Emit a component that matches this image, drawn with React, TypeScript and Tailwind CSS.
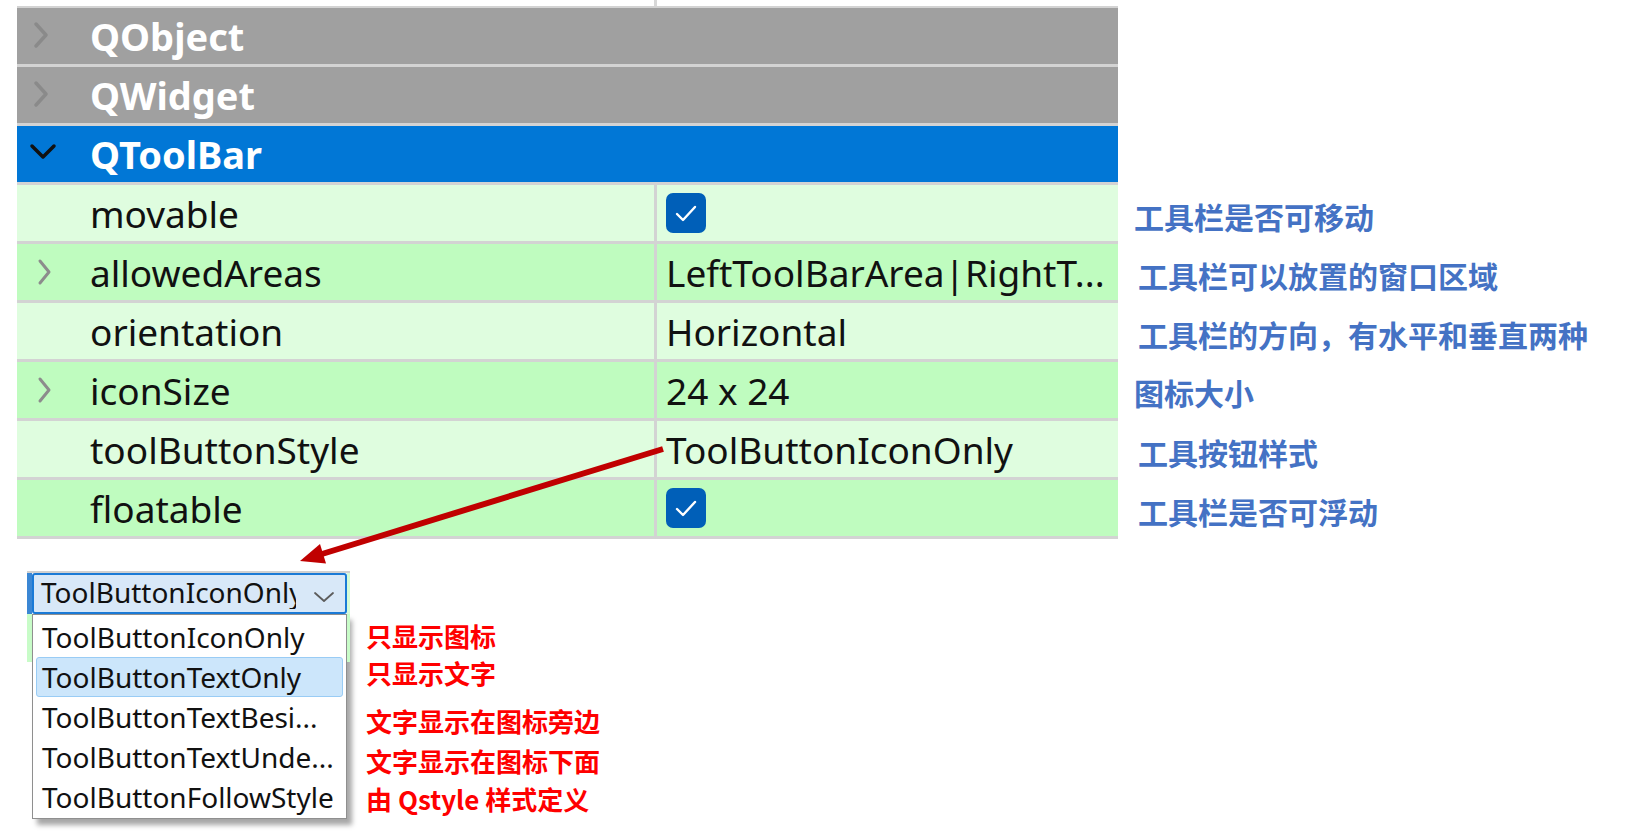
import React from "react";

const LATIN = "font-['Noto_Sans','Noto_Sans_CJK_SC',sans-serif]";
const CJK = "font-['Noto_Sans_CJK_SC',sans-serif]";

function HeaderChevronRight() {
  return (
    <svg width="20" height="28" viewBox="0 0 20 28" className="absolute left-[14px] top-[13px]">
      <path d="M5 3 L15 14 L5 25" fill="none" stroke="#8a8a8a" strokeWidth="3.5" strokeLinecap="round" strokeLinejoin="round" />
    </svg>
  );
}

function HeaderChevronDown() {
  return (
    <svg width="28" height="20" viewBox="0 0 28 20" className="absolute left-[12px] top-[16px]">
      <path d="M3 4 L14 15 L25 4" fill="none" stroke="#111111" strokeWidth="3.5" strokeLinecap="round" strokeLinejoin="round" />
    </svg>
  );
}

function PropChevron() {
  return (
    <svg width="18" height="28" viewBox="0 0 18 28" className="absolute left-[18px] top-[14px]">
      <path d="M5 3 L14 14 L5 25" fill="none" stroke="#8c8c8c" strokeWidth="3" strokeLinecap="round" strokeLinejoin="round" />
    </svg>
  );
}

function CheckBox() {
  return (
    <div className="flex h-[40px] w-[40px] items-center justify-center rounded-[7px] bg-[#005fb8]">
      <svg width="40" height="40" viewBox="0 0 40 40">
        <path d="M11 21 L17 27 L29 14" fill="none" stroke="#ffffff" strokeWidth="2.4" strokeLinecap="round" strokeLinejoin="round" />
      </svg>
    </div>
  );
}

function HeaderRow({ label, bg, expanded }: { label: string; bg: string; expanded?: boolean }) {
  return (
    <div className={`relative flex h-[59px] w-[1101px] items-center border-b-[3px] border-[#d3d3d3] ${bg}`}>
      {expanded ? <HeaderChevronDown /> : <HeaderChevronRight />}
      <span className={`${LATIN} pl-[73px] text-[38px] font-bold leading-none text-white`}>{label}</span>
    </div>
  );
}

function PropRow({
  name,
  value,
  bg,
  expandable,
  note,
  noteClass,
}: {
  name: string;
  value: React.ReactNode;
  bg: string;
  expandable?: boolean;
  note: string;
  noteClass: string;
}) {
  return (
    <div className="flex items-center">
      <div className={`flex h-[59px] w-[1101px] border-b-[3px] border-[#d3d3d3] ${bg}`}>
        <div className="relative flex w-[637px] items-center">
          {expandable ? <PropChevron /> : null}
          <span className={`${LATIN} pl-[73px] text-[37px] leading-none text-[#111111]`}>{name}</span>
        </div>
        <div className="w-[3px] bg-[#d3d3d3]" />
        <div className="flex flex-1 items-center pl-[9px]">
          {typeof value === "string" ? (
            <span className={`${LATIN} text-[37px] leading-none text-[#111111]`}>{value}</span>
          ) : (
            value
          )}
        </div>
      </div>
      <div className={`${CJK} text-[30px] font-bold leading-none text-[#4472c4] ${noteClass}`}>{note}</div>
    </div>
  );
}

function ListItem({ text, active }: { text: string; active?: boolean }) {
  return (
    <div
      className={`flex h-[40px] items-center rounded-[3px] pl-[5px] ${
        active ? "mx-[3px] border border-[#99ccf5] bg-[#cce6fb]" : "mx-[3px] border border-transparent"
      }`}
    >
      <span className={`${LATIN} text-[28px] leading-none text-[#111111]`}>{text}</span>
    </div>
  );
}

export default function App() {
  return (
    <div className="relative h-[834px] w-[1631px] overflow-hidden bg-white">
      <div className="pl-[17px]">
        <div className="flex h-[6px]">
          <div className="w-[637px]" />
          <div className="w-[3px] bg-[#d8d8d8]" />
        </div>
        <div className="w-[1101px] border-t-2 border-[#d3d3d3]" />
        <HeaderRow label="QObject" bg="bg-[#a0a0a0]" />
        <HeaderRow label="QWidget" bg="bg-[#a0a0a0]" />
        <HeaderRow label="QToolBar" bg="bg-[#0177d6]" expanded />
        <PropRow name="movable" value={<CheckBox />} bg="bg-[#dffddf]" note="工具栏是否可移动" noteClass="ml-[16px] mt-[2px]" />
        <PropRow
          name="allowedAreas"
          value="LeftToolBarArea|RightT..."
          bg="bg-[#bffcbf]"
          expandable
          note="工具栏可以放置的窗口区域"
          noteClass="ml-[20px] mt-[2px]"
        />
        <PropRow name="orientation" value="Horizontal" bg="bg-[#dffddf]" note="工具栏的方向，有水平和垂直两种" noteClass="ml-[20px] mt-[2px]" />
        <PropRow name="iconSize" value="24 x 24" bg="bg-[#bffcbf]" expandable note="图标大小" noteClass="ml-[16px]" />
        <PropRow name="toolButtonStyle" value="ToolButtonIconOnly" bg="bg-[#dffddf]" note="工具按钮样式" noteClass="ml-[20px] mt-[2px]" />
        <PropRow name="floatable" value={<CheckBox />} bg="bg-[#bffcbf]" note="工具栏是否可浮动" noteClass="ml-[20px] mt-[2px]" />
      </div>

      <div className="mt-[32px] flex pl-[27px]">
        <div className="w-[323px]">
          <div className="h-[2px] bg-[#d0d0d0]" />
          <div className="flex">
            <div className="w-[5px] bg-[#3b87d4]" />
            <div className="flex h-[41px] w-[315px] items-center rounded-[3px] border-2 border-[#1a7ad6] bg-[#d8e8f8]">
              <div className="w-[262px] overflow-hidden whitespace-nowrap pl-[7px]">
                <span className={`${LATIN} text-[28px] leading-none text-[#111111]`}>ToolButtonIconOnly</span>
              </div>
              <svg width="22" height="12" viewBox="0 0 22 12" className="ml-[17px] mt-[6px]">
                <path d="M2 2 L11 10 L20 2" fill="none" stroke="#5c5c5c" strokeWidth="1.8" strokeLinecap="round" strokeLinejoin="round" />
              </svg>
            </div>
            <div className="w-[3px] bg-[#d6fcd6]" />
          </div>
          <div className="flex items-start">
            <div className="h-[48px] w-[5px] bg-[#c8fcc8]" />
            <div className="h-[205px] w-[315px] border border-[#8f8f8f] bg-white pt-[2px] shadow-[5px_6px_5px_rgba(0,0,0,0.35)]">
              <ListItem text="ToolButtonIconOnly" />
              <ListItem text="ToolButtonTextOnly" active />
              <ListItem text="ToolButtonTextBesi..." />
              <ListItem text="ToolButtonTextUnde..." />
              <ListItem text="ToolButtonFollowStyle" />
            </div>
            <div className="h-[48px] w-[3px] bg-[#c8fcc8]" />
          </div>
        </div>
        <div className={`${CJK} ml-[16px] pt-[46px] text-[26px] font-bold text-[#ff0000]`}>
          <div className="h-[38px] leading-[38px]">只显示图标</div>
          <div className="mt-[-1px] h-[38px] leading-[38px]">只显示文字</div>
          <div className="mt-[10px] h-[38px] leading-[38px]">文字显示在图标旁边</div>
          <div className="mt-[2px] h-[38px] leading-[38px]">文字显示在图标下面</div>
          <div className="h-[38px] leading-[38px]">由 Qstyle 样式定义</div>
        </div>
      </div>

      <svg width="1631" height="834" viewBox="0 0 1631 834" className="pointer-events-none absolute left-0 top-0">
        <line x1="663" y1="449" x2="322" y2="554" stroke="#c00000" strokeWidth="6" />
        <polygon points="300,561 326,563.5 320,544" fill="#c00000" />
      </svg>
    </div>
  );
}
